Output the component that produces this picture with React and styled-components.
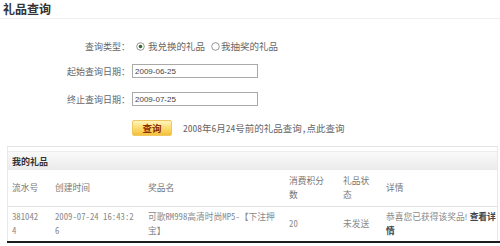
import React from 'react';
import styled, { createGlobalStyle } from 'styled-components';

const Global = createGlobalStyle`
  html, body { margin: 0; padding: 0; background: #fff; }
  body {
    font-family: "Noto Sans CJK SC", "Liberation Sans", sans-serif;
    font-feature-settings: "hwid";
    -webkit-font-smoothing: antialiased;
  }
`;

const Page = styled.div`
  width: 500px;
  height: 246px;
  overflow: hidden;
  background: #fff;
`;

const TitleBar = styled.div`
  height: 18px;
  border-bottom: 1px solid #efefef;
  padding-left: 3px;
  display: flex;
  align-items: center;
`;

const Title = styled.h1`
  margin: 0;
  font-size: 12px;
  line-height: 16px;
  font-weight: bold;
  color: #333;
`;

const Row = styled.div`
  display: flex;
  align-items: center;
  height: ${p => p.$h || 14}px;
  margin-top: ${p => p.$top}px;
`;

const Label = styled.div`
  width: 130px;
  flex: none;
  text-align: right;
  font-size: 9px;
  color: #666;
  white-space: nowrap;
`;

const Radio = styled.label`
  display: inline-flex;
  align-items: center;
  gap: ${p => (p.$tight ? 1 : 3)}px;
  margin-left: ${p => p.$ml}px;
  font-size: 9.5px;
  color: #666;
  white-space: nowrap;
`;

const RadioIcon = ({ checked }) => (
  <svg width="9" height="9" viewBox="0 0 9 9">
    <circle cx="4.5" cy="4.5" r="3.8" fill="#fff" stroke="#8a8a8a" strokeWidth="0.9" />
    {checked && <circle cx="4.5" cy="4.5" r="1.8" fill="#2f6b2f" />}
  </svg>
);

const DateInput = styled.input`
  box-sizing: border-box;
  width: 126px;
  height: 14px;
  margin: 0 0 0 2px;
  padding: 0 2px;
  border: 1px solid #a9a9a9;
  background: #fff;
  font-family: "Liberation Sans", sans-serif;
  font-size: 8px;
  color: #444;
  outline: none;
`;

const QueryButton = styled.button`
  box-sizing: border-box;
  width: 40px;
  height: 16px;
  margin-left: 2px;
  padding: 0;
  border: 1px solid #f0c760;
  border-radius: 2px;
  background: linear-gradient(#fff4c0 0%, #fddf78 45%, #f3c03a 100%);
  font-family: "Noto Sans CJK SC", sans-serif;
  font-size: 9.5px;
  font-weight: bold;
  color: #8c2c00;
  line-height: 14px;
`;

const Hint = styled.span`
  margin-left: 11px;
  font-size: 9.5px;
  color: #666;
  white-space: nowrap;
`;

const ListBox = styled.section`
  box-sizing: border-box;
  width: 491px;
  margin: 10px 0 0 7px;
  border-top: 1px solid #e3e3e3;
  border-left: 1px solid #e8e8e8;
  border-right: 1px solid #e8e8e8;
  padding-top: 4px;
`;

const ListHeader = styled.div`
  height: 18px;
  border-top: 1px solid #ececec;
  background: linear-gradient(#f9f9f9, #ebebeb);
  display: flex;
  align-items: center;
  padding-left: 4px;
  font-size: 9px;
  font-weight: bold;
  color: #333;
`;

const Table = styled.table`
  width: 489px;
  border-collapse: collapse;
  table-layout: fixed;
  font-size: 8.75px;
  line-height: 14px;
`;

const HeadRow = styled.tr`
  height: 36px;
  border-bottom: 1px solid #e2e2e2;
`;

const BodyRow = styled.tr`
  height: 35px;
`;

const Th = styled.th`
  box-sizing: border-box;
  width: ${p => p.$w}px;
  padding: 0 0 0 ${p => p.$pl ?? 5}px;
  text-align: left;
  font-weight: normal;
  color: #777;
  vertical-align: middle;
`;

const Td = styled.td`
  box-sizing: border-box;
  padding: 0 0 0 ${p => p.$pl ?? 5}px;
  color: #8a8a8a;
  vertical-align: middle;
`;

const Wrap = styled.div`
  width: ${p => p.$w}px;
  word-break: break-all;
`;

const Bang = styled.span`
  font-family: "Liberation Sans", sans-serif;
  font-feature-settings: normal;
`;

const DetailLink = styled.a`
  color: #444;
  font-weight: bold;
  text-decoration: none;
`;

const BottomRule = styled.div`
  margin-left: 7px;
  height: 2px;
  background: #1c1c1c;
`;

export default function App() {
  return (
    <Page>
      <Global />
      <TitleBar>
        <Title>礼品查询</Title>
      </TitleBar>

      <Row $top={20}>
        <Label>查询类型：</Label>
        <Radio $ml={6}>
          <RadioIcon checked />
          我兑换的礼品
        </Radio>
        <Radio $ml={6} $tight>
          <RadioIcon />
          我抽奖的礼品
        </Radio>
      </Row>

      <Row $top={11}>
        <Label>起始查询日期：</Label>
        <DateInput readOnly value="2009-06-25" />
      </Row>

      <Row $top={14}>
        <Label>终止查询日期：</Label>
        <DateInput readOnly value="2009-07-25" />
      </Row>

      <Row $top={14} $h={16}>
        <Label />
        <QueryButton>查询</QueryButton>
        <Hint>2008年6月24号前的礼品查询，点此查询</Hint>
      </Row>

      <ListBox>
        <ListHeader>我的礼品</ListHeader>
        <Table>
          <thead>
            <HeadRow>
              <Th $w={42} $pl={4}>流水号</Th>
              <Th $w={93}>创建时间</Th>
              <Th $w={141}>奖品名</Th>
              <Th $w={54}><Wrap $w={38}>消费积分数</Wrap></Th>
              <Th $w={43}><Wrap $w={30}>礼品状态</Wrap></Th>
              <Th $w={116}>详情</Th>
            </HeadRow>
          </thead>
          <tbody>
            <BodyRow>
              <Td $pl={4}><Wrap $w={28}>3810424</Wrap></Td>
              <Td><Wrap $w={80}>2009-07-24 16:43:26</Wrap></Td>
              <Td><Wrap $w={130}>可歌RM998高清时尚MP5-【下注押宝】</Wrap></Td>
              <Td>20</Td>
              <Td>未发送</Td>
              <Td>
                <Wrap $w={116}>
                  恭喜您已获得该奖品<Bang>! </Bang><DetailLink href="#">查看详情</DetailLink>
                </Wrap>
              </Td>
            </BodyRow>
          </tbody>
        </Table>
      </ListBox>
      <BottomRule />
    </Page>
  );
}
